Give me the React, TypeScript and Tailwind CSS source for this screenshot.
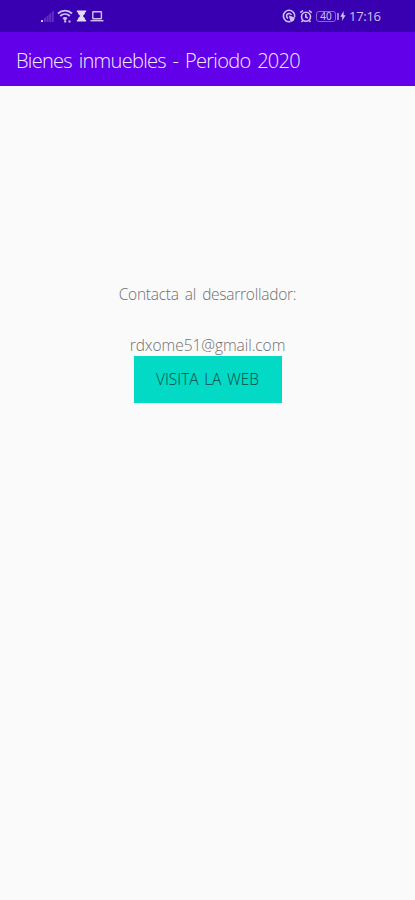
function StatusBar() {
  return (
    <div className="flex h-8 items-center justify-between bg-[#3900b1] pl-10 pr-[33px] text-[#cfc0f0]">
      <div className="flex items-center gap-[2px]">
        {/* Signal */}
        <svg width="15" height="14" viewBox="0 0 15 14" fill="currentColor">
          <rect x="1" y="11" width="2" height="2" />
          <g opacity="0.25">
            <path d="M4 9.5l2-1.6V13H4zM6.6 7.4l2-1.6V13h-2zM9.2 5.2l2-1.7V13h-2zM11.8 3l2-1.7V13h-2z" />
          </g>
        </svg>
        {/* Wifi */}
        <svg width="16" height="14" viewBox="0 0 16 14" fill="none" stroke="currentColor" strokeWidth="1.8">
          <path d="M1 4.5C5 .7 11 .7 15 4.5M3.2 7c2.8-2.6 6.8-2.6 9.6 0" />
          <path d="M6 9.2c1.2-1 2.8-1 4 0L8 11.6z" fill="currentColor" strokeWidth="1" />
          <path d="M7.2 12.4h2M11.5 12.4h2" strokeWidth="2" />
        </svg>
        {/* Hourglass */}
        <svg width="13" height="14" viewBox="0 0 14 14" fill="currentColor" className="text-[#e4daf8]">
          <path d="M2 1h10v2h-1.3v1.5L8.4 7l2.3 2.5V11H12v2H2v-2h1.3V9.5L5.6 7 3.3 4.5V3H2z" />
        </svg>
        {/* Laptop */}
        <svg width="14" height="14" viewBox="0 0 14 14" fill="none" stroke="currentColor" strokeWidth="1.4">
          <rect x="2.8" y="2.7" width="8.6" height="7" rx="0.5" />
          <path d="M.5 11.7h13" />
        </svg>
      </div>
      <div className="flex items-center">
        {/* Data saver */}
        <svg width="14" height="14" viewBox="0 0 14 14" fill="none" stroke="currentColor" strokeWidth="1.6" className="mr-[3px]">
          <path d="M8.2 12.6A5.7 5.7 0 1 1 12.7 8" />
          <path d="M6 9.2A2.5 2.5 0 1 1 9.4 6" strokeWidth="1.5" />
          <path d="M6.8 6.6l6.2 2-1.2 3.2-3.2 1.4z" fill="currentColor" stroke="none" />
        </svg>
        {/* Alarm */}
        <svg width="14" height="14" viewBox="0 0 13 14" fill="none" stroke="currentColor" strokeWidth="1.6" className="mr-[3px]">
          <circle cx="6.5" cy="7.7" r="4.5" />
          <path d="M.8 3.7l2.7-2.2M12.2 3.7L9.5 1.5M6.3 5v3l2 1M3.2 11.5L2 13M9.8 11.5L11 13" />
        </svg>
        {/* Battery */}
        <div className="flex h-[11px] w-[20px] items-center justify-center rounded-[3px] border border-[#8768d4] font-['Noto_Sans','Open_Sans',sans-serif] text-[10px] font-normal leading-none">
          40
        </div>
        <div className="ml-px h-[7px] w-[2px] bg-[#9b80dc]" />
        <svg width="6" height="10" viewBox="0 0 6 10" fill="currentColor" className="ml-px mr-[3px]">
          <path d="M3.6 0L.3 5.8h2L2 10l3.6-5.8h-2z" />
        </svg>
        <span className="w-[33px] whitespace-nowrap font-['Open_Sans','Noto_Sans',sans-serif] text-[13px] font-normal leading-4 tracking-[-0.3px]">
          17:16
        </span>
      </div>
    </div>
  );
}

export default function App() {
  return (
    <div className="flex h-[900px] w-[415px] flex-col overflow-hidden bg-[#fafafa] font-['Open_Sans','Noto_Sans',sans-serif] font-light">
      <StatusBar />
      <header className="flex h-[54px] items-center bg-[#6200ea] pl-4 pt-[4px]">
        <h1 className="whitespace-nowrap text-[20px] leading-6 tracking-[-0.7px] text-[#f3ecfe] [word-spacing:2.2px]">
          Bienes inmuebles - Periodo 2020
        </h1>
      </header>
      <main className="flex flex-col items-center pt-[197px] text-[15.5px] text-[#707070]">
        <p className="h-[51px] whitespace-nowrap leading-[22px] tracking-[-0.25px] [word-spacing:2.3px]">
          Contacta al desarrollador:
        </p>
        <p className="h-[22px] whitespace-nowrap leading-[22px] tracking-[-0.05px]">rdxome51@gmail.com</p>
        <button className="h-[47px] w-[148px] whitespace-nowrap bg-[#03dac5] text-[15.5px] text-[#0b4a45] [word-spacing:1.5px]">
          VISITA LA WEB
        </button>
      </main>
    </div>
  );
}
